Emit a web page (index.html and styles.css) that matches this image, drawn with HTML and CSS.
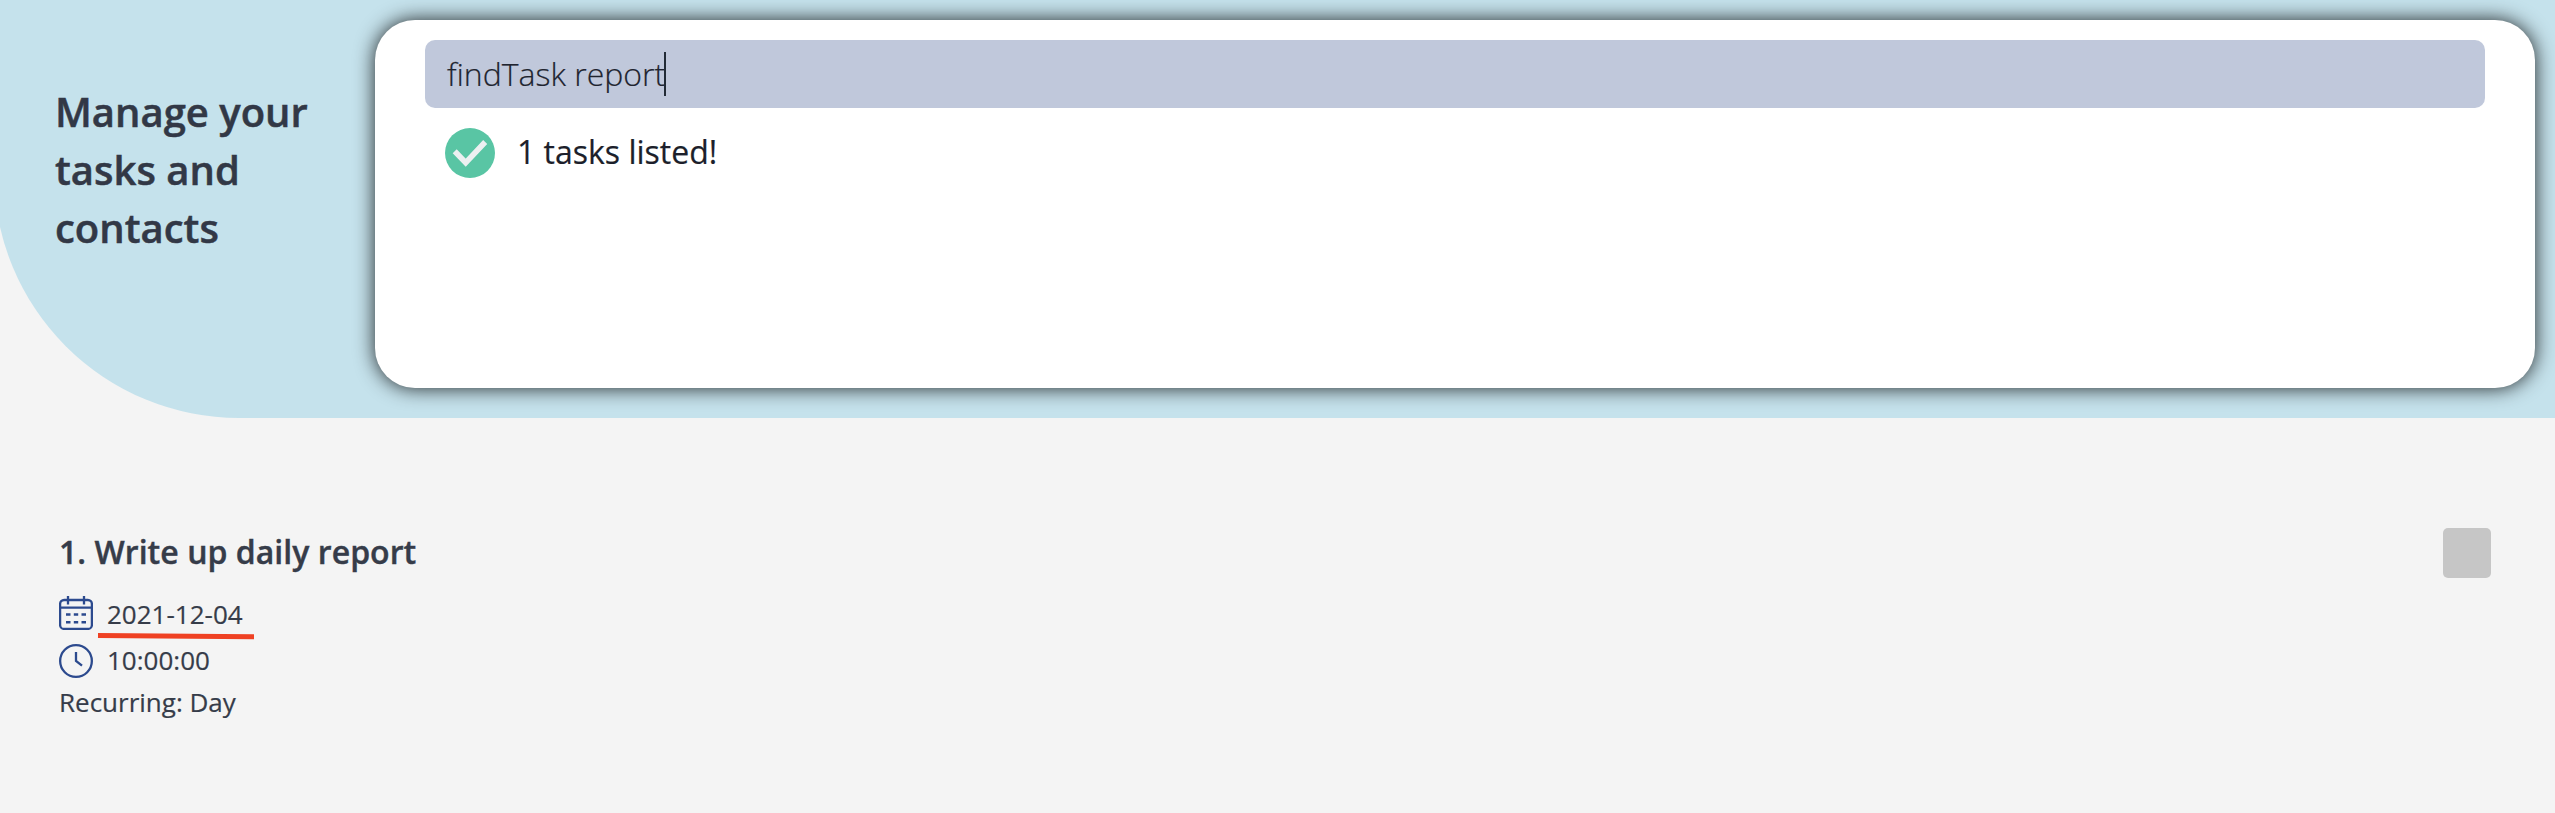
FILE: index.html
```html
<!DOCTYPE html>
<html lang="en">
<head>
<meta charset="utf-8">
<title>Tasks and contacts</title>
<link rel="stylesheet" href="styles.css">
</head>
<body>
<header class="header">
  <h1 class="headline">Manage your tasks and contacts</h1>
  <section class="console">
    <div class="command"><span class="command-text">findTask report</span><span class="caret"></span></div>
    <div class="result">
      <svg class="check" viewBox="0 0 50 50"><circle cx="25" cy="25" r="25" fill="#59c5a4"/><path d="M9.7 23.3 20.7 34.7 40.2 14" fill="none" stroke="#ecf0f1" stroke-width="5.6"/></svg>
      <span class="result-text">1 tasks listed!</span>
    </div>
  </section>
</header>
<main class="task">
  <div class="task-info">
    <h2 class="task-title">1. Write up daily report</h2>
    <div class="detail date">
      <svg class="icon" viewBox="0 0 34 34" fill="none" stroke="#2c4a8e" stroke-width="2.3"><rect x="1.100" y="4" width="31.800" height="28.900" rx="4"/><path d="M1 11.700H33M9 0V8.500M25 0V8.500"/><path d="M7 18.500H11.500M14.800 18.500H19.200M22.500 18.500H27M7 26.300H11.500M14.800 26.300H19.200M22.500 26.300H27" stroke-width="2.600"/></svg>
      <span class="detail-text">2021-12-04</span>
      <svg class="underline" viewBox="0 0 158 8"><path d="M1 3.500 157 4.700" stroke="#ef4123" stroke-width="5"/></svg>
    </div>
    <div class="detail time">
      <svg class="icon" viewBox="0 0 34 34" fill="none" stroke="#2c4a8e" stroke-width="2.3"><circle cx="17" cy="17" r="15.850"/><path d="M17 8V17L23 21.700"/></svg>
      <span class="detail-text">10:00:00</span>
    </div>
    <div class="detail recurring"><span class="detail-text">Recurring: Day</span></div>
  </div>
  <div class="checkbox"></div>
</main>
</body>
</html>
```
FILE: styles.css
```css
* { box-sizing: border-box; }
body {
  margin: 0;
  min-height: 813px;
  overflow: hidden;
  background: #f4f4f4;
  color: #363c49;
  font-family: "Open Sans", sans-serif;
}
.header {
  display: flex;
  align-items: flex-start;
  height: 418px;
  margin-left: -6px;
  padding: 20px 20px 0 61px;
  background: #c5e2ec;
  border-bottom-left-radius: 245px;
}
.headline {
  flex: none;
  width: 320px;
  margin: 63px 0 0;
  padding-right: 60px;
  font-size: 40px;
  font-weight: 600;
  line-height: 58px;
  color: #323846;
  -webkit-text-stroke: 0.5px;
}
.console {
  flex: 1;
  height: 368px;
  padding: 20px 50px;
  background: #fff;
  border-radius: 40px;
  box-shadow: 0 0 20px rgba(0, 0, 0, 0.85);
}
.command {
  display: flex;
  align-items: center;
  height: 68px;
  padding-left: 22px;
  background: #c0c8db;
  border-radius: 10px;
  color: #20242f;
}
.command-text {
  font-size: 32px;
  font-weight: 300;
  line-height: 44px;
  white-space: nowrap;
  -webkit-text-stroke: 0.2px;
}
.caret {
  width: 2px;
  height: 44px;
  margin-left: -1px;
  background: #222b36;
}
.result {
  display: flex;
  align-items: flex-start;
  gap: 22px;
  margin: 20px 0 0 20px;
}
.check { width: 50px; height: 50px; }
.result-text {
  font-size: 32px;
  line-height: 48px;
  color: #1c1f2b;
  -webkit-text-stroke: 0.2px;
}
.task {
  display: flex;
  justify-content: space-between;
  padding: 110px 64px 0 59px;
}
.task-title {
  margin: 2px 0 22px;
  font-size: 32px;
  font-weight: 600;
  line-height: 44px;
  letter-spacing: 0.04px;
  -webkit-text-stroke: 0.4px;
}
.detail {
  display: flex;
  align-items: center;
  gap: 14px;
  font-size: 26px;
  line-height: 36px;
  -webkit-text-stroke: 0.2px;
}
.date { position: relative; height: 34px; margin-bottom: 14px; }
.date .detail-text { padding-top: 2px; }
.time { height: 34px; margin-bottom: 6px; }
.time .detail-text { padding-bottom: 2px; }
.icon { width: 34px; height: 34px; }
.underline {
  position: absolute;
  left: 38px;
  top: 36px;
  width: 158px;
  height: 8px;
}
.checkbox {
  width: 48px;
  height: 50px;
  background: #c6c6c6;
  border-radius: 5px;
}
```
